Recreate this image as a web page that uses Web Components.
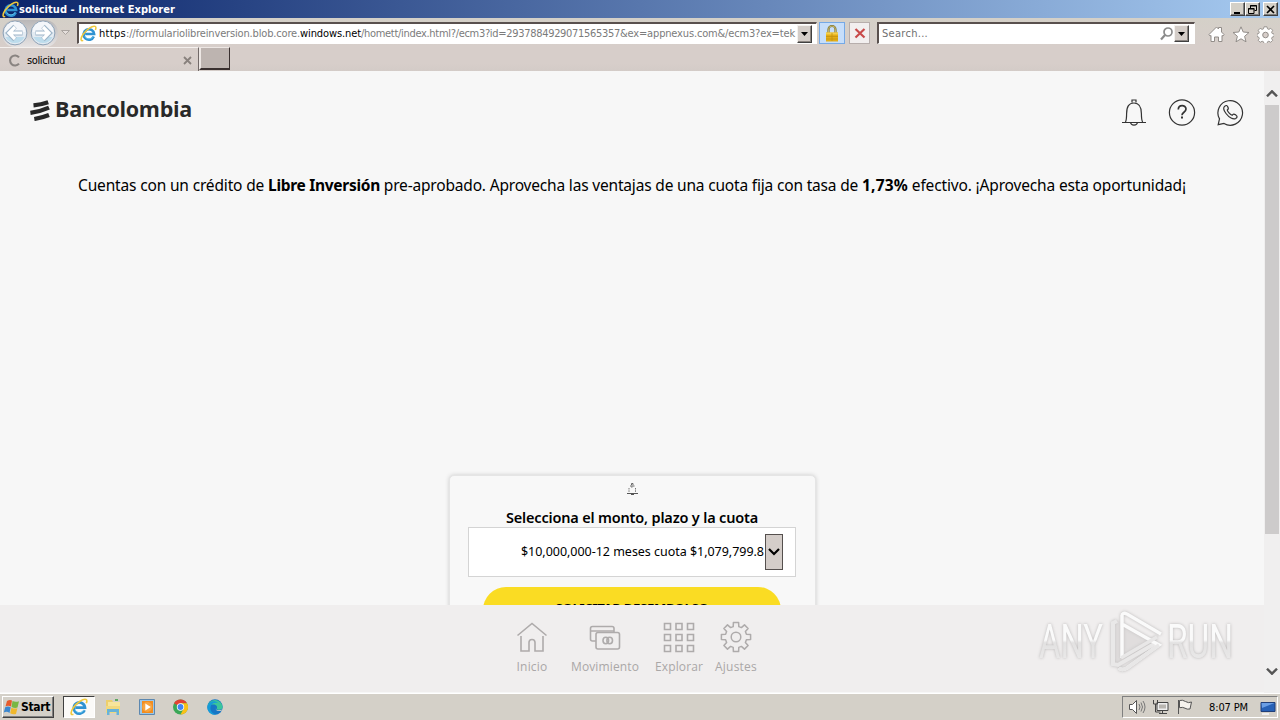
<!DOCTYPE html>
<html lang="es">
<head>
<meta charset="utf-8">
<title>solicitud</title>
<style>
html,body{margin:0;height:100%;overflow:hidden}
body{font-family:"DejaVu Sans Condensed","DejaVu Sans",sans-serif;font-size:11px;color:#000}
</style>
</head>
<body>
<desktop-screen></desktop-screen>
<script>
const svg = (w, h, body, extra = '') => `<svg width="${w}" height="${h}" viewBox="0 0 ${w} ${h}" fill="none" ${extra}>${body}</svg>`;
const ieLogo = s => `<svg width="${s}" height="${s}" viewBox="0 0 18 18" fill="none">
  <path d="M14.6 12.2A5.6 5.6 0 1 1 15 9.6H5.5" stroke="#2f92d2" stroke-width="2.7"/>
  <path d="M14 11.9A5 5 0 0 1 5 12" stroke="#62c1ec" stroke-width="1"/>
  <path d="M3.4 16.3C.5 17.5.2 14.4 3.3 9.8 7 4.600 13.300.400 16 1.500c1.300.600.900 2.300.300 3.800" stroke="#efc83c" stroke-width="1.600"/></svg>`;
const arrowDown = svg(7, 4, '<path d="M0 0h7L3.500 4z" fill="#000"/>');

function define(name, html, setup) {
  customElements.define(name, class extends HTMLElement {
    constructor() {
      super();
      const t = document.createElement('template');
      t.innerHTML = `<style>*{box-sizing:border-box}svg{display:block;flex:none}:host{box-sizing:border-box}</style>` + html;
      this.attachShadow({mode: 'open'}).append(t.content.cloneNode(true));
      if (setup) setup(this);
    }
  });
}

define('title-bar', `<style>
:host{display:flex;height:18px;align-items:center;background:linear-gradient(90deg,#0a246a,#a6caf0);color:#fff;padding:0 2px 0 2px;font:bold 11px "DejaVu Sans Condensed",sans-serif}
.t{flex:1}.b{width:15px;height:14px;background:#d4d0c8;border:1px solid;border-color:#fff #404040 #404040 #fff;box-shadow:inset -1px -1px #808080;display:grid;place-items:center}
.b:last-child{margin-left:3px}</style>
${ieLogo(17)}<span class="t"><fit-text w="156">solicitud - Internet Explorer</fit-text></span>
<div class="b">${svg(9, 9, '<path d="M1 7h6v2H1z" fill="#000"/>')}</div>
<div class="b">${svg(9, 9, '<path d="M2.500 3V.500h6v5H6.500M2 1h7M.500 3.500h5.500v5H.500zM0 4h6.500" stroke="#000"/>')}</div>
<div class="b">${svg(9, 9, '<path d="M1 1l7 7M8 1L1 8" stroke="#000" stroke-width="1.600"/>')}</div>`);

define('round-button', `<style>:host{display:block}:host([flip]) svg{transform:scaleX(-1)}</style>
${svg(26, 26, '<circle cx="13" cy="13" r="11.900" fill="#e3ebf2" stroke="#8ca0b5"/><path d="M2.500 12a10.500 10.500 0 0 1 21 0z" fill="#f4f6fa"/><path d="M3.500 17a10.500 10.500 0 0 0 19 0z" fill="#bddcec"/><path d="M13 6.500l-6.500 6.500 6.500 6.500M8 13h12.500" stroke="#9db4c8" stroke-width="4.800"/><path d="M13 7l-6 6 6 6M8 13h12" stroke="#fff" stroke-width="3.200"/>')}`);

define('drop-button', `<style>:host{display:grid;place-items:center;width:15px;height:18px;background:#d4cdc8;border:1px solid;border-color:#f4f1ee #404040 #404040 #f4f1ee;box-shadow:inset -1px -1px #8a8480;flex:none}</style>${arrowDown}`);

define('address-field', `<style>:host{display:flex;align-items:center;width:740px;height:22px;background:#fff;border:1px solid;border-color:#59504e #fff #fff #59504e;border-top-width:2px;border-left-width:2px;color:#7b7b7b;padding-left:1px;overflow:hidden;flex:none}
.u{width:697px;margin-left:2px;overflow:hidden;white-space:nowrap;height:18px;line-height:18px;flex:none;display:flex}b{font-weight:400;color:#000;display:inline-flex}drop-button{margin-left:1px}</style>
${ieLogo(17)}<div class="u"><b><fit-text w="27">https</fit-text></b><fit-text w="174">://formulariolibreinversion.blob.core.</fit-text><b><fit-text w="61">windows.net</fit-text></b><fit-text w="259">/homett/index.html?/ecm3?id=2937884929071565357</fit-text><fit-text w="175">&amp;ex=appnexus.com&amp;/ecm3?ex=tek</fit-text></div><drop-button></drop-button>`);

define('search-field', `<style>:host{display:flex;align-items:center;width:318px;height:22px;background:#fff;border:1px solid;border-color:#59504e #fff #fff #59504e;border-top-width:2px;border-left-width:2px;color:#6f6f6f;padding:0 5px 0 3px;flex:none}
span{flex:1}drop-button{height:17px}</style>
<span><fit-text w="46">Search...</fit-text></span>${svg(15, 16, '<circle cx="9" cy="6" r="4" stroke="#8b8b8b" stroke-width="1.700"/><path d="M6 9l-4 4.500" stroke="#8b8b8b" stroke-width="2.200"/>')}<drop-button></drop-button>`);

define('nav-bar', `<style>:host{display:flex;height:29px;align-items:center;padding:1px 7px 0 2px;background:linear-gradient(#d4d0c8,#d7ceca)}
.h{display:flex;gap:2px;width:56px;height:27px;background:linear-gradient(#b9b7b8,#e6e3e3);border-radius:13px;flex:none}.d{margin:0 7px 0 3px}
.q{height:22px;width:26px;margin-left:2px;background:#c6defa;border:1px solid #75a9e6;display:grid;place-items:center;flex:none}
.x{width:21px;height:22px;margin-left:4px;margin-right:7px;background:#f2efef;border:1px solid #b7aeac;display:grid;place-items:center;flex:none}.i{display:flex;gap:7px;margin-left:13px;padding-top:3px}</style>
<div class="h"><round-button></round-button><round-button flip></round-button></div>
<div class="d">${svg(9, 6, '<path d="M.500.500h8l-4 4z" fill="#e5dfdc" stroke="#aaa4a0"/>')}</div>
<address-field></address-field>
<div class="q">${svg(14, 17, '<path d="M3.500 8V4.500a3.500 3.500 0 0 1 7 0V8" stroke="#81752e" stroke-width="2.200"/><path d="M3.500 8V4.500a3.500 3.500 0 0 1 7 0V8" stroke="#d0c47e" stroke-width=".800"/><path d="M1 7.500h12v9H1z" fill="#e3ad16"/><path d="M1 7.500h12v2H1z" fill="#f3cf4d"/><path d="M1 11.500h12M1 14h12M7 8v8" stroke="#c39312" stroke-width=".800"/>')}</div>
<div class="x">${svg(12, 12, '<path d="M1.500 2l9 8.500M10.500 2l-9 8.500" stroke="#c84a4a" stroke-width="2.200"/>')}</div>
<search-field></search-field>
<div class="i">${svg(17, 17, '<path d="M1 8.500L8.500 1l2 2V1.500h3V6L16 8.500 15 10l-1-.500V15.500h-3.500V11h-4v4.500H3V9.500L2 10z" fill="#fff" stroke="#928d89"/>')}
${svg(18, 17, '<path d="M9 .800l2.200 5.200 5.800.500-4.400 3.800 1.400 5.500L9 12.800l-5 3 1.400-5.500L1 6.500 6.800 6z" fill="#fff" stroke="#928d89"/>')}
${svg(17, 17, '<path d="M7 .800h3l.500 2 1.400.600 1.800-1.100 2 2-1.100 1.900.600 1.300 2 .500v2.500l-2 .600-.600 1.400 1.100 1.800-2 2-1.800-1.100-1.400.600-.500 1.900H7l-.500-1.900-1.400-.600-1.900 1.100-2-2 1.100-1.800-.600-1.400-1.700-.600V8l1.700-.500.600-1.300-1.100-1.900 2-2 1.900 1.100 1.400-.600z" fill="#fff" stroke="#928d89" stroke-width=".900"/><circle cx="8.500" cy="9" r="2.800" fill="#d7ceca" stroke="#928d89"/>')}</div>`);

define('tab-strip', `<style>:host{display:flex;height:24px;background:linear-gradient(#d7ceca 70%,#d3cbc7)}
.t{width:199px;height:24px;border-top:1px solid #f5f1ef;border-right:1px solid #716968;display:flex;align-items:center;padding:1px 6px 0 8px;gap:6px}.t span{flex:1}
.n{width:31px;height:23px;background:#bdb4b0;border:1px solid;border-color:#ede7e4 #39302f #39302f #ede7e4;border-bottom-width:2px;border-left-width:2px}</style>
<div class="t">${svg(13, 13, '<path d="M11 3.400A5 5 0 1 0 11 9.600" stroke="#898481" stroke-width="2.100"/>')}<span><fit-text w="38">solicitud</fit-text></span>${svg(9, 9, '<path d="M1 1l7 7M8 1L1 8" stroke="#88817d" stroke-width="1.800"/>')}</div><div class="n"></div>`);

define('brand-logo', `<style>:host{display:flex;align-items:center;font:bold 21.500px/26px "Open Sans","Noto Sans",sans-serif;color:#292929;height:28px;gap:5px}fit-text{margin-top:-2px}</style>
${svg(20, 22, '<path d="M3.500 6.300Q11 5.600 18.200 3.200M.400 13.800Q10 12.600 19 8.600M4.300 20Q12 18.800 19 16" stroke="#292929" stroke-width="4.200"/>')}<fit-text w="137">Bancolombia</fit-text>`);

define('bank-header', `<style>:host{display:flex;justify-content:space-between;align-items:flex-start;padding:25px 20px 0 30px;height:85px}.i{display:flex;gap:20px;padding-top:2px}</style>
<brand-logo></brand-logo><div class="i">
${svg(28, 28, '<path d="M12 4.500V2h4v2.500M5.500 24c.900-2 1.100-4 1.100-8.300C6.600 8.500 9 5 14 5s7.400 3.500 7.400 10.700c0 4.300.200 6.300 1.200 8.300M2 24.500h24M10.500 24.500c.500 3.500 6.500 3.500 7 0" stroke="#333" stroke-width="1.200"/>')}
${svg(28, 28, '<circle cx="14" cy="14.500" r="12.600" stroke="#333" stroke-width="1.200"/><path d="M10.300 11.500c0-5.200 7.700-4.900 7.700-.500 0 3.300-4 3.100-4 6.200" stroke="#333" stroke-width="1.700"/><path d="M13 18.500h2v2h-2z" fill="#333"/>')}
${svg(28, 28, '<path d="M2.200 26.700l1.300-5.800A12.300 12.300 0 1 1 8 25.500z" stroke="#333" stroke-width="1.200"/><path d="M9 8c-2 1.300-1.800 4 1 7.500 3 4 7.300 6.400 9.700 5 2-1.300 1.600-2.200.200-3.400-2-1.500-2.700-1.300-3.800.200-1.700-.600-4.400-3.500-4.800-5.200 1.500-1 1.500-1.600.500-3.200-.900-1.500-1.700-1.800-2.800-.900z" stroke="#333" stroke-width="1.200"/>')}</div>`);

define('offer-text', `<style>:host{display:flex;white-space:pre;font:15.500px/24px "Noto Sans","Open Sans",sans-serif;padding-left:78px;margin-top:17px}b{display:inline-flex}</style><fit-text w="190">Cuentas con un crédito de </fit-text><b><fit-text w="112">Libre Inversión</fit-text></b><fit-text w="482"> pre-aprobado. Aprovecha las ventajas de una cuota fija con tasa de </fit-text><b><fit-text w="46">1,73%</fit-text></b><fit-text w="278"> efectivo. ¡Aprovecha esta oportunidad¡</fit-text>`);

define('amount-select', `<style>:host{display:flex;align-items:center;width:328px;height:50px;background:#fff;border:1px solid #d4d4d4;padding:0 12px 0 52px;font:12.500px "Noto Sans","Open Sans",sans-serif;flex:none}
.v{width:243px;overflow:hidden;white-space:nowrap;flex:none;height:20px;line-height:20px}.b{width:18px;height:36px;background:#d4cdc9;border:1px solid #55504e;display:grid;place-items:center;margin-left:1px}</style>
<div class="v"><fit-text w="243">$10,000,000-12 meses cuota $1,079,799.8</fit-text></div><div class="b">${svg(14, 10, '<path d="M2 2l5 5 5-5" stroke="#000" stroke-width="2.200"/>')}</div>`);

define('loan-card', `<style>:host{display:flex;flex-direction:column;align-items:center;width:367px;height:230px;margin-left:449px;border-radius:5px;background:#f8f8f8;border:1px solid #e5e5e5;box-shadow:0 0 4px #ccc;padding:7px 1px 0 0}
h2{margin:10px 0 0;font:600 14.500px/22px "Noto Sans","Open Sans",sans-serif;height:22px;margin-bottom:0;padding-top:1px;white-space:nowrap}
button{margin-top:10px;width:298px;height:46px;flex:none;border:0;border-radius:23px;background:#fadc23;font:bold 13px/18px "Noto Sans","Open Sans",sans-serif;color:#000;padding:0 0 5px}</style>
${svg(14, 12, '<path d="M6.500 2V.500h1.500V2M5 3h4.500" stroke="#666"/><path d="M4 5v4M10.500 5v4M6 4h2" stroke="#777" stroke-dasharray="1.500 .800"/><path d="M2 10.500h11M6 11.500h3" stroke="#555"/>')}
<h2><fit-text w="252">Selecciona el monto, plazo y la cuota</fit-text></h2><amount-select></amount-select><button><fit-text w="153">SOLICITAR DESEMBOLSO</fit-text></button>`);

define('nav-item', `<style>:host{display:flex;flex-direction:column;align-items:center;gap:3px;font:12px/22px "Open Sans","Noto Sans",sans-serif;color:#aaa7a7;stroke:#aeabab}</style><slot name="icon"></slot><slot></slot>`);

define('bottom-nav', `<style>:host{display:flex;width:1264px;height:87px;padding:16px 0 0 516px;background:#f0eeee}
nav-item:nth-of-type(2){margin-left:23px}nav-item:nth-of-type(3){margin-left:16px}nav-item:nth-of-type(4){margin-left:12px}</style>
<nav-item><svg slot="icon" width="32" height="32" fill="none" stroke-width="1.600"><path d="M1.500 14.500L16 2.500l14.500 12M5 15v15h8v-8.500c0-4 6-4 6 0V30h8V15"/></svg><fit-text w="31">Inicio</fit-text></nav-item>
<nav-item><svg slot="icon" width="32" height="32" fill="none" stroke-width="1.600"><path d="M7 20H3.500Q1.500 20 1.500 18V7.500Q1.500 5.500 3.500 5.500H23Q25 5.500 25 7.500V11M1.500 10H25"/><rect x="7" y="11.500" width="23.500" height="16.500" rx="2"/><ellipse cx="16.800" cy="19.500" rx="2.800" ry="3.200"/><ellipse cx="20.700" cy="19.500" rx="2.800" ry="3.200"/></svg><fit-text w="68">Movimiento</fit-text></nav-item>
<nav-item><svg slot="icon" width="32" height="32" fill="none" stroke-width="1.600"><path d="M1.500 2.500h6v6h-6zM13 2.500h6v6h-6zM24.500 2.500h6v6h-6zM1.500 13.500h6v6h-6zM13 13.500h6v6h-6zM24.500 13.500h6v6h-6zM1.500 24.500h6v6h-6zM13 24.500h6v6h-6zM24.500 24.500h6v6h-6z"/></svg><fit-text w="48">Explorar</fit-text></nav-item>
<nav-item><svg slot="icon" width="32" height="32" fill="none" stroke-width="1.500" stroke-linejoin="round"><path id="gear" d=""/><circle cx="16" cy="16" r="4.800"/></svg><fit-text w="42">Ajustes</fit-text></nav-item>`, host => {
  // Eight-toothed gear outline
  let d = '';
  for (let i = 0; i < 8; i++) {
    for (const [r, off] of [[10.8, -15], [14.8, -10], [14.8, 10], [10.8, 15]]) {
      const a = (i * 45 + off) * Math.PI / 180;
      d += (d ? 'L' : 'M') + (16 + r * Math.cos(a)).toFixed(1) + ' ' + (16 + r * Math.sin(a)).toFixed(1);
    }
  }
  host.shadowRoot.getElementById('gear').setAttribute('d', d + 'z');
});

define('page-scrollbar', `<style>:host{display:flex;flex-direction:column;width:16px;height:622px;background:#f0efef;align-items:center;padding-top:19px;justify-content:space-between}
.c{display:flex;flex-direction:column;align-items:center;gap:8px}.k{width:14px;height:429px;background:#cdcbcb}.d{padding-bottom:18px}</style>
<div class="c">${svg(12, 7, '<path d="M1 6.300l5-5 5 5" stroke="#555" stroke-width="2.400"/>')}<div class="k"></div></div><div class="d">${svg(12, 7, '<path d="M1 .700l5 5 5-5" stroke="#555" stroke-width="2.400"/>')}</div>`);

define('run-watermark', `<style>:host{display:block;position:absolute;left:1030px;top:606px;filter:drop-shadow(0 0 1.500px #b9b7b7)}text{font:400 48px Roboto,sans-serif}</style>
<svg width="216" height="72" viewBox="-4 0 216 72" fill="none"><defs><linearGradient id="g" x1="0" y1="16" x2="0" y2="56" gradientUnits="userSpaceOnUse"><stop offset=".45" stop-color="#fafafa"/><stop offset=".52" stop-color="#e2e1e1"/><stop offset="1" stop-color="#ebeaea"/></linearGradient></defs>
<text x="5" y="52" textLength="64" lengthAdjust="spacingAndGlyphs" fill="url(#g)">ANY</text><text x="133" y="52" textLength="66" lengthAdjust="spacingAndGlyphs" fill="url(#g)">RUN</text>
<path d="M83 15l-4 2v41l5 1 38-22" fill="#dddcdc" fill-opacity=".3" stroke="#e9e8e8" stroke-width="4"/><path d="M88 9v43M88 10q0-4 5-2L127 28M88 18l37 21-32 23q-5 3-8 0" stroke="#fafafa" stroke-width="3.500"/><path d="M87 52l36-21M125 39L93 62q-5 3-8 0" stroke="#e8e7e7" stroke-width="3.500"/></svg>`);

define('bank-page', `<style>:host{display:flex;height:622px;background:#f7f7f7;overflow:hidden}.p{width:1264px;display:flex;flex-direction:column}.m{height:534px;overflow:hidden;display:flex;flex-direction:column}loan-card{margin-top:278px;flex:none}bank-header,offer-text{flex:none}</style>
<div class="p"><div class="m"><bank-header></bank-header><offer-text></offer-text><loan-card></loan-card></div><bottom-nav></bottom-nav></div><page-scrollbar></page-scrollbar>`);

define('task-bar', `<style>:host{display:flex;align-items:center;height:27px;background:#d4d0c8;border-top:1px solid #fff;padding:0 2px 0 2px}
.s{width:52px;height:22px;border:1px solid;border-color:#fff #404040 #404040 #fff;box-shadow:inset -1px -1px #808080;display:flex;align-items:center;font-weight:bold;font-size:12px;gap:1px}
.a{width:32px;height:22px;margin-left:9px;background:#fbfaf8;border:1px solid;border-color:#404040 #fff #fff #404040;display:grid;place-items:center}.q{display:flex;gap:16px;margin-left:9px;flex:1}
.t{display:flex;align-items:center;width:156px;height:22px;border:1px solid;border-color:#808080 #fff #fff #808080;padding:0 1px 0 5px}.t svg{margin-right:6px}.t span{flex:1;padding-left:9px}.t svg:last-child{margin:0}</style>
<div class="s">${svg(17, 17, '<path d="M4 2q3-2 5-.400L8 7.500Q5 6 2.500 7.500z" fill="#e65b2c"/><path d="M9.500 2q3 1.500 6.500.200L14.500 8.500Q12 9.500 8.500 8z" fill="#79b743"/><path d="M2.200 8.200Q5 6.700 7.700 8.200L6.500 14Q4 12 .800 13.500z" fill="#3b87cf"/><path d="M8.400 8.700Q12 10.200 14.400 9.200L13 15Q10 16 7.200 14.300z" fill="#f0b82d"/>')}<fit-text w="29">Start</fit-text></div>
<div class="a">${ieLogo(18)}</div>
<div class="q">
${svg(18, 18, '<path d="M2 2h6l1 2h6v9H2z" fill="#edcf6c"/><path d="M4 4h12v8H4z" fill="#f7e59b"/><path d="M2 8h14v7H2z" fill="#f1d97f"/><path d="M3 17v-6h12v6h-2.500v-3h-7v3z" fill="#68b3d9"/><path d="M11 1h3v2h-3z" fill="#5ea961"/>')}
${svg(18, 18, '<path d="M1.500 1.500h15v15h-15z" fill="#9cc7e8" stroke="#5d88b0"/><path d="M4 3h11v12H4z" fill="#f28d20"/><circle cx="9.300" cy="9" r="5" fill="#f7a440"/><path d="M7.300 5.500l5.500 3.500-5.500 3.500z" fill="#fff"/>')}
${svg(18, 18, '<circle cx="8.500" cy="9" r="7.500" fill="#3aa757"/><path d="M8.500 9L2 5.200A7.500 7.500 0 0 1 15 5.200H8.500z" fill="#e34133"/><path d="M8.500 5.200H15A7.500 7.500 0 0 1 8.500 16.500L12 10z" fill="#fbc116"/><circle cx="8.500" cy="9" r="3.700" fill="#fff"/><circle cx="8.500" cy="9" r="2.900" fill="#4285f4"/>')}
${svg(18, 18, '<circle cx="9" cy="9" r="7.700" fill="#1676c5"/><path d="M1.500 8A7.700 7.700 0 0 1 16.700 9c0 3-5 3.500-6.200 2 1.500-2 0-4.500-3-4.500-2.500 0-5 .500-6 1.500z" fill="#3bc59c"/><path d="M1.500 8C3 3 9 2 12 5c-3-.600-7 0-7.500 4.500C4 13 7 16.500 11 16.400 5 18 .500 13 1.500 8z" fill="#159bd8"/><path d="M9.500 9c-1 3 3 4.500 7.500 2.300-3 3.500-8.500 1.500-7.500-2.300z" fill="#d4d0c8"/>')}</div>
<div class="t">${svg(18, 16, '<path d="M1.500 5.500h3L8.500 1.500v13l-4-4h-3z" fill="#fff" stroke="#555"/><path d="M11 5q2 3 0 6M13 3.500q3 4.500 0 9M15 2q4 6 0 12" stroke="#777"/>')}
${svg(18, 16, '<path d="M5 3.500h11v8H5z" fill="#eee" stroke="#444"/><path d="M7 5.500h7v4H7z" fill="#b8b5b0"/><path d="M1.500 1v4h4V1M3.500 5v8h5M10.500 12v2M7 14.500h8" stroke="#444"/>')}
${svg(18, 16, '<path d="M3.500 1.500q3-1 6 1t6 .500L14 10q-3 .600-5-.800t-5.500-.500zM2.500 1v14" fill="#f5f2ed" stroke="#555"/>')}
<span><fit-text w="39">8:07 PM</fit-text></span>${svg(16, 17, '<path d="M1 3.500h14v9H1z" fill="#2761b6" stroke="#213f78"/><path d="M1.500 4h13L2 9z" fill="#6a9ee4"/><path d="M2 15h7" stroke="#eee" stroke-width="2"/>')}</div>`);

define('desktop-screen', `<style>:host{display:flex;flex-direction:column;width:1280px;height:720px;position:relative}</style>
<title-bar></title-bar><nav-bar></nav-bar><tab-strip></tab-strip><bank-page></bank-page><task-bar></task-bar><run-watermark></run-watermark>`);

// Inline label that spaces its letters so that the run is exactly w pixels wide.
customElements.define('fit-text', class extends HTMLElement {
  constructor() {
    super();
    this.attachShadow({mode: 'open'}).innerHTML = '<style>:host{display:inline-block;white-space:pre;flex:none}</style><slot></slot>';
  }
  connectedCallback() {
    const w = this.getBoundingClientRect().width, n = this.textContent.length;
    if (w && n) this.style.letterSpacing = ((this.getAttribute('w') - w) / n).toFixed(4) + 'px';
  }
});
</script>
</body>
</html>
